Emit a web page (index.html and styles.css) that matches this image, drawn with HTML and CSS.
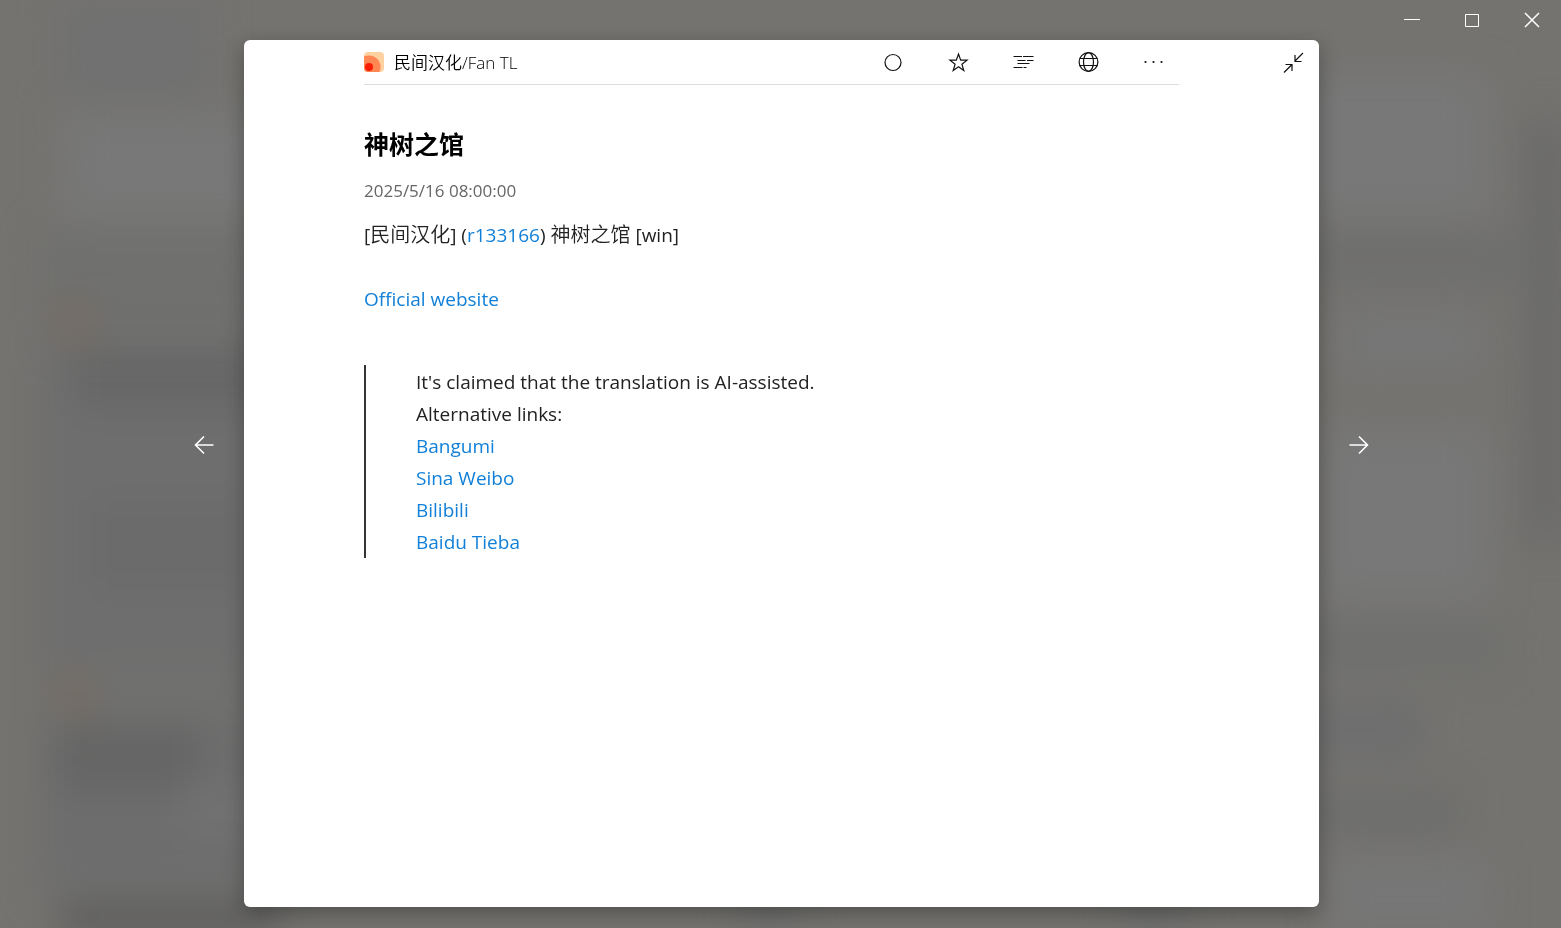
FILE: index.html
```html
<!DOCTYPE html>
<html lang="zh-CN">
<head>
    <meta charset="UTF-8">
    <meta name="viewport" content="width=device-width, initial-scale=1.0">
    <title>神树之馆</title>
    <link rel="stylesheet" href="styles.css">
</head>
<body>
    <!-- Blurred article list behind the reader -->
    <svg class="backdrop" viewBox="0 0 1561 928" preserveAspectRatio="none" aria-hidden="true">
        <rect x="60" y="0" width="150" height="100" fill="#717171"/>
        <rect x="65" y="115" width="200" height="103" fill="#787878"/>
        <rect x="40" y="232" width="220" height="110" fill="#70706f"/>
        <rect x="60" y="300" width="30" height="40" fill="#776b60"/>
        <rect x="40" y="345" width="230" height="330" fill="#6e6e6e"/>
        <rect x="75" y="348" width="200" height="60" fill="#676767"/>
        <rect x="90" y="500" width="150" height="90" fill="#6b6b6b"/>
        <rect x="40" y="660" width="220" height="65" fill="#70706f"/>
        <rect x="60" y="675" width="30" height="40" fill="#776b60"/>
        <rect x="40" y="725" width="220" height="170" fill="#6d6d6d"/>
        <rect x="60" y="725" width="140" height="65" fill="#656565"/>
        <rect x="180" y="780" width="80" height="60" fill="#717171"/>
        <rect x="60" y="910" width="220" height="60" fill="#4e4e4e"/>
        <rect x="1300" y="75" width="187" height="140" fill="#787878"/>
        <rect x="1300" y="235" width="220" height="50" fill="#6f6f6e"/>
        <rect x="1340" y="312" width="140" height="60" fill="#767676"/>
        <rect x="1320" y="430" width="167" height="170" fill="#787878"/>
        <rect x="1530" y="120" width="80" height="420" fill="#686868"/>
        <rect x="1300" y="625" width="200" height="45" fill="#6f706e"/>
        <rect x="1300" y="705" width="120" height="50" fill="#6d6e6e"/>
        <rect x="1300" y="790" width="160" height="45" fill="#6e6e6d"/>
        <rect x="1330" y="860" width="157" height="100" fill="#777777"/>
        <rect x="740" y="890" width="60" height="60" fill="#6b6b6a"/>
        <rect x="1120" y="890" width="70" height="60" fill="#6b6b6a"/>
    </svg>

    <div class="window">
        <div class="titlebar">
            <button class="window-button" aria-label="Minimize">
                <svg width="18" height="16" viewBox="0 0 18 16"><path d="M2 7.500h16"/></svg>
            </button>
            <button class="window-button" aria-label="Maximize">
                <svg width="18" height="16" viewBox="0 0 18 16"><path d="M3.500 2.500h13v12h-13z"/></svg>
            </button>
            <button class="window-button" aria-label="Close">
                <svg width="18" height="16" viewBox="0 0 18 16"><path d="M3 1l14 14M17 1L3 15" stroke-width="1.500"/></svg>
            </button>
        </div>

        <div class="stage">
            <button class="nav-button prev" aria-label="Previous article">
                <svg width="20" height="20" viewBox="0 0 20 20"><path d="M19.500 10H1.500M10 1.500L1.500 10l8.500 8.500"/></svg>
            </button>

            <main class="panel">
                <div class="reader">
                    <header class="toolbar">
                        <svg class="feed-icon" width="20" height="20" viewBox="0 0 20 20" aria-hidden="true">
                            <clipPath id="feed-clip"><rect width="20" height="20" rx="4"/></clipPath>
                            <g clip-path="url(#feed-clip)">
                                <rect width="20" height="20" fill="#ffd0a0"/>
                                <circle cx="5" cy="15" r="11.500" fill="#ff8754"/>
                                <circle cx="5" cy="15" r="4" fill="#f91b02"/>
                            </g>
                        </svg>
                        <span class="feed-name">民间汉化/Fan TL</span>
                        <div class="actions">
                            <button class="icon-button" aria-label="Mark as unread">
                                <svg width="20" height="20" viewBox="0 0 20 20"><circle cx="10" cy="10.500" r="8"/></svg>
                            </button>
                            <button class="icon-button" aria-label="Star">
                                <svg width="20" height="20" viewBox="0 0 20 20"><path d="M10.500 2l2.200 6.200h6.300l-5.100 4 1.900 6.300-5.300-3.700-5.300 3.700 1.900-6.300-5.100-4h6.300z"/></svg>
                            </button>
                            <button class="icon-button" aria-label="Load full content">
                                <svg width="20" height="20" viewBox="0 0 20 20"><path d="M.5 4.500h8.500M10 4.500h10.500M4.500 8.500h8M14 8.500h6.500M4.500 11.500h12M.5 15.500h9M10.500 15.500h3"/></svg>
                            </button>
                            <button class="icon-button" aria-label="Open in browser">
                                <svg width="20" height="20" viewBox="0 0 20 20"><circle cx="10.500" cy="10" r="9.400"/><ellipse cx="10.500" cy="10" rx="5" ry="9.400"/><path d="M1.800 6.500h17.400M1.800 13.500h17.400"/></svg>
                            </button>
                            <button class="icon-button" aria-label="More">
                                <svg class="dots" width="20" height="20" viewBox="0 0 20 20"><circle cx="2.500" cy="10" r="1.100"/><circle cx="10.500" cy="10" r="1.100"/><circle cx="18.500" cy="10" r="1.100"/></svg>
                            </button>
                        </div>
                    </header>

                    <article class="article">
                        <h1 class="title">神树之馆</h1>
                        <p class="date">2025/5/16 08:00:00</p>
                        <p>[<span class="han">民间汉化</span>] (<a href="#r133166">r133166</a>) <span class="han">神树之馆</span> [win]</p>
                        <p><a href="#official">Official website</a></p>
                        <blockquote>
                            It's claimed that the translation is AI-assisted.<br>
                            Alternative links:<br>
                            <a href="#bangumi">Bangumi</a><br>
                            <a href="#weibo">Sina Weibo</a><br>
                            <a href="#bilibili">Bilibili</a><br>
                            <a href="#tieba">Baidu Tieba</a>
                        </blockquote>
                    </article>
                </div>

                <button class="icon-button collapse" aria-label="Exit full screen">
                    <svg width="20" height="20" viewBox="0 0 20 20"><path d="M20 1l-8 8M12 3v6.500h6.500M1 20.500l8-8M2.500 12.500H9V19"/></svg>
                </button>
            </main>

            <button class="nav-button next" aria-label="Next article">
                <svg width="20" height="20" viewBox="0 0 20 20"><path d="M.5 10h18M10 1.500l8.500 8.500-8.500 8.500"/></svg>
            </button>
        </div>
    </div>
</body>
</html>
```
FILE: styles.css
```css
* {
    box-sizing: border-box;
}
body {
    margin: 0;
    overflow: hidden;
    background-color: #747370;
    color: #222;
    font-family: "Open Sans", "Noto Sans CJK SC", sans-serif;
}
button {
    display: flex;
    align-items: center;
    justify-content: center;
    padding: 0;
    border: none;
    background: none;
    cursor: pointer;
}
button svg {
    overflow: visible;
    fill: none;
    stroke: currentColor;
}
a {
    color: #1280d8;
    text-decoration: none;
}
a:hover {
    text-decoration: underline;
}

.backdrop {
    position: fixed;
    top: 0;
    left: 0;
    width: 100%;
    height: 100%;
    filter: blur(18px);
}
.window {
    position: relative;
    display: flex;
    flex-direction: column;
    min-height: 100vh;
    padding-bottom: 21px;
}

/* Window controls */
.titlebar {
    display: flex;
    justify-content: flex-end;
    height: 40px;
}
.window-button {
    width: 60px;
    color: white;
}

/* Reader panel with the arrows on both sides */
.stage {
    flex: 1;
    display: grid;
    grid-template-columns: 244px 1fr 242px;
}
.nav-button {
    align-self: center;
    width: 40px;
    height: 40px;
    margin: 0 20px 58px;
    color: white;
}
.nav-button svg {
    stroke-width: 1.6;
}
.prev {
    justify-self: end;
}
.panel {
    display: grid;
    grid-template-columns: 120px 1fr 140px;
    background-color: white;
    border-radius: 6px;
    box-shadow: 0 6px 20px rgba(0, 0, 0, 0.3);
}
.reader {
    grid-column: 2;
}

.toolbar {
    display: flex;
    align-items: center;
    height: 45px;
    border-bottom: 1px solid #ddd;
}
.feed-name {
    margin-left: 10px;
    padding-bottom: 2px;
    color: #000;
    font-size: 17px;
    font-weight: 350;
}
.actions {
    display: flex;
    gap: 13px;
    margin-left: auto;
}
.icon-button {
    width: 52px;
    height: 44px;
    color: #111;
}
.icon-button svg {
    stroke-width: 1.2;
}
.icon-button .dots {
    fill: currentColor;
    stroke: none;
}
.collapse {
    justify-self: end;
}

/* Article */
.article {
    padding-top: 40px;
    font-size: 19px;
    line-height: 32px;
}
.article p {
    margin: 0 0 32px;
}
.article .title {
    margin: 0;
    color: #000;
    font-size: 25px;
    line-height: 38px;
}
.article .date {
    margin: 12px 0;
    color: #666;
    font-size: 17px;
}
.han {
    font-size: 20px;
    font-weight: 350;
}
.article blockquote {
    margin: 50px 0 0;
    padding: 1px 0 0 50px;
    border-left: 2px solid #333;
}
```
